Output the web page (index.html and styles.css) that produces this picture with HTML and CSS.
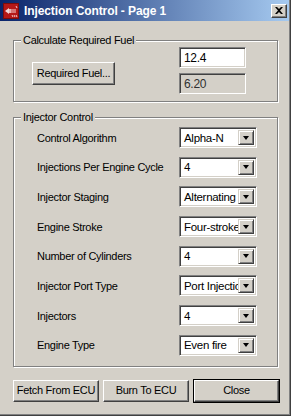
FILE: index.html
```html
<!DOCTYPE html>
<html>
<head>
<meta charset="utf-8">
<link rel="stylesheet" href="styles.css">
</head>
<body>
<div class="window">
  <div class="titlebar">
    <svg class="app-icon" width="16" height="16" viewBox="0 0 16 16">
      <rect x="0" y="0" width="16" height="16" fill="#b51818"/>
      <rect x="0.5" y="0.5" width="15" height="15" fill="none" stroke="#7a0c0c"/>
      <path d="M2 8 L6 5 L6 11 Z" fill="#f3d8d8"/>
      <rect x="6" y="6" width="7" height="4" fill="#e9b4b4"/>
      <path d="M8 7 H13 M8 9 H13" stroke="#b51818" stroke-width="0.8"/>
      <path d="M9 12 L10 14 M11 12 L12 14 M13 12 L14 14" stroke="#f0c8c8" stroke-width="1"/>
      <path d="M13 3 L14 5" stroke="#f0c8c8" stroke-width="1"/>
    </svg>
    <span class="title">Injection Control - Page 1</span>
    <div class="close-btn">
      <svg width="8" height="7" viewBox="0 0 8 7">
        <path d="M0 0 H2 L4 2 L6 0 H8 L5 3.5 L8 7 H6 L4 5 L2 7 H0 L3 3.5 Z" fill="#000"/>
      </svg>
    </div>
  </div>

  <div class="client">
    <fieldset class="group group-fuel">
      <legend>Calculate Required Fuel</legend>
      <div class="fuel-row">
        <div class="btn btn-fuel">Required Fuel...</div>
        <div class="fuel-fields">
          <div class="field field-input">12.4</div>
          <div class="field field-readonly">6.20</div>
        </div>
      </div>
    </fieldset>

    <fieldset class="group group-injector">
      <legend>Injector Control</legend>
      <div class="rows">
        <span class="label">Control Algorithm</span>
        <div class="combo"><span class="combo-text">Alpha-N</span><span class="combo-btn"><span class="arrow"></span></span></div>

        <span class="label">Injections Per Engine Cycle</span>
        <div class="combo"><span class="combo-text">4</span><span class="combo-btn"><span class="arrow"></span></span></div>

        <span class="label">Injector Staging</span>
        <div class="combo"><span class="combo-text">Alternating</span><span class="combo-btn"><span class="arrow"></span></span></div>

        <span class="label">Engine Stroke</span>
        <div class="combo"><span class="combo-text">Four-stroke</span><span class="combo-btn"><span class="arrow"></span></span></div>

        <span class="label">Number of Cylinders</span>
        <div class="combo"><span class="combo-text">4</span><span class="combo-btn"><span class="arrow"></span></span></div>

        <span class="label">Injector Port Type</span>
        <div class="combo"><span class="combo-text">Port Injection</span><span class="combo-btn"><span class="arrow"></span></span></div>

        <span class="label">Injectors</span>
        <div class="combo"><span class="combo-text">4</span><span class="combo-btn"><span class="arrow"></span></span></div>

        <span class="label">Engine Type</span>
        <div class="combo"><span class="combo-text">Even fire</span><span class="combo-btn"><span class="arrow"></span></span></div>
      </div>
    </fieldset>

    <div class="actions">
      <div class="btn btn-action">Fetch From ECU</div>
      <div class="btn btn-action">Burn To ECU</div>
      <div class="btn btn-action btn-default">Close</div>
    </div>
  </div>
</div>
</body>
</html>
```

FILE: styles.css
```css
html, body {
  margin: 0;
  padding: 0;
  background: #d4d0c8;
}

body {
  font-family: "Liberation Sans", Arial, sans-serif;
  font-size: 11px;
  letter-spacing: -0.3px;
  color: #000;
}

.window {
  width: 291px;
  height: 416px;
  box-sizing: border-box;
  background: #d4d0c8;
  border-right: 1px solid #404040;
  border-bottom: 1px solid #404040;
  box-shadow: inset -1px -1px 0 #808080;
  display: flex;
  flex-direction: column;
  overflow: hidden;
}

/* Title bar */
.titlebar {
  height: 21px;
  margin-right: 1px;
  background: linear-gradient(to right, #0a246a, #a6caf0);
  display: flex;
  align-items: center;
  padding: 0 2px 0 3px;
  flex-shrink: 0;
}

.app-icon {
  display: block;
  flex-shrink: 0;
}

.title {
  margin-left: 5px;
  color: #fff;
  font-weight: bold;
  font-size: 12px;
  letter-spacing: -0.1px;
  flex: 1;
  white-space: nowrap;
}

.close-btn {
  width: 16px;
  height: 14px;
  box-sizing: border-box;
  background: #d4d0c8;
  border: 1px solid;
  border-color: #fff #404040 #404040 #fff;
  box-shadow: inset -1px -1px 0 #808080;
  display: flex;
  align-items: center;
  justify-content: center;
  padding: 0 1px 1px 0;
}

.close-btn svg {
  display: block;
}

/* Client area */
.client {
  flex: 1;
  padding-top: 13px;
  display: flex;
  flex-direction: column;
}

.group {
  margin: 0 0 0 13px;
  width: 265px;
  box-sizing: border-box;
  padding: 0;
  border: 1px solid #808080;
  box-shadow: inset 1px 1px 0 #fff, 1px 1px 0 #fff;
  min-inline-size: 0;
}

.group legend {
  margin-left: 7px;
  padding: 0 2px;
  line-height: 13px;
  background: #d4d0c8;
}

/* Fuel group */
.fuel-row {
  display: flex;
  align-items: flex-start;
  gap: 64px;
  padding: 0 0 7px 18px;
}

.btn {
  box-sizing: border-box;
  background: #d4d0c8;
  border: 1px solid;
  border-color: #fff #404040 #404040 #fff;
  box-shadow: inset -1px -1px 0 #808080;
  display: flex;
  align-items: center;
  justify-content: center;
  white-space: nowrap;
  padding-bottom: 1px;
}

.btn-fuel {
  width: 83px;
  height: 23px;
  margin-top: 15px;
}

.fuel-fields {
  display: flex;
  flex-direction: column;
  gap: 5px;
}

.field {
  width: 67px;
  height: 21px;
  box-sizing: border-box;
  border: 1px solid;
  border-color: #808080 #fff #fff #808080;
  box-shadow: inset 1px 1px 0 #404040, inset -1px -1px 0 #d4d0c8;
  padding: 1px 0 0 4px;
  display: flex;
  align-items: center;
  font-size: 12px;
}

.field-input {
  background: #fff;
}

.field-readonly {
  background: #d4d0c8;
  color: #303030;
}

/* Injector group */
.group-injector {
  margin-top: 9px;
}

.rows {
  display: grid;
  grid-template-columns: 142px 78px;
  grid-auto-rows: 21px;
  row-gap: 8.7px;
  align-items: center;
  padding: 3px 0 10px 23px;
}

.label {
  white-space: nowrap;
  overflow: hidden;
}

.combo {
  height: 21px;
  box-sizing: border-box;
  background: #fff;
  border: 1px solid;
  border-color: #808080 #fff #fff #808080;
  box-shadow: inset 1px 1px 0 #404040, inset -1px -1px 0 #d4d0c8;
  padding: 2px;
  display: flex;
  align-items: stretch;
}

.combo-text {
  flex: 1;
  overflow: hidden;
  white-space: nowrap;
  padding-left: 2px;
  display: flex;
  align-items: center;
  font-size: 11.5px;
  letter-spacing: -0.3px;
}

.combo-btn {
  width: 16px;
  flex-shrink: 0;
  box-sizing: border-box;
  background: #d4d0c8;
  border: 1px solid;
  border-color: #d4d0c8 #404040 #404040 #d4d0c8;
  box-shadow: inset 1px 1px 0 #fff, inset -1px -1px 0 #808080;
  display: flex;
  align-items: center;
  justify-content: center;
}

.arrow {
  width: 0;
  height: 0;
  border-left: 3.5px solid transparent;
  border-right: 3.5px solid transparent;
  border-top: 4px solid #000;
}

/* Bottom buttons */
.actions {
  display: flex;
  gap: 4px;
  padding-left: 13px;
  margin-top: 13px;
}

.btn-action {
  width: 86px;
  height: 22px;
}

.btn-default {
  width: 85px;
  margin-left: 1px;
  outline: 1px solid #000;
  outline-offset: 0;
}
```
